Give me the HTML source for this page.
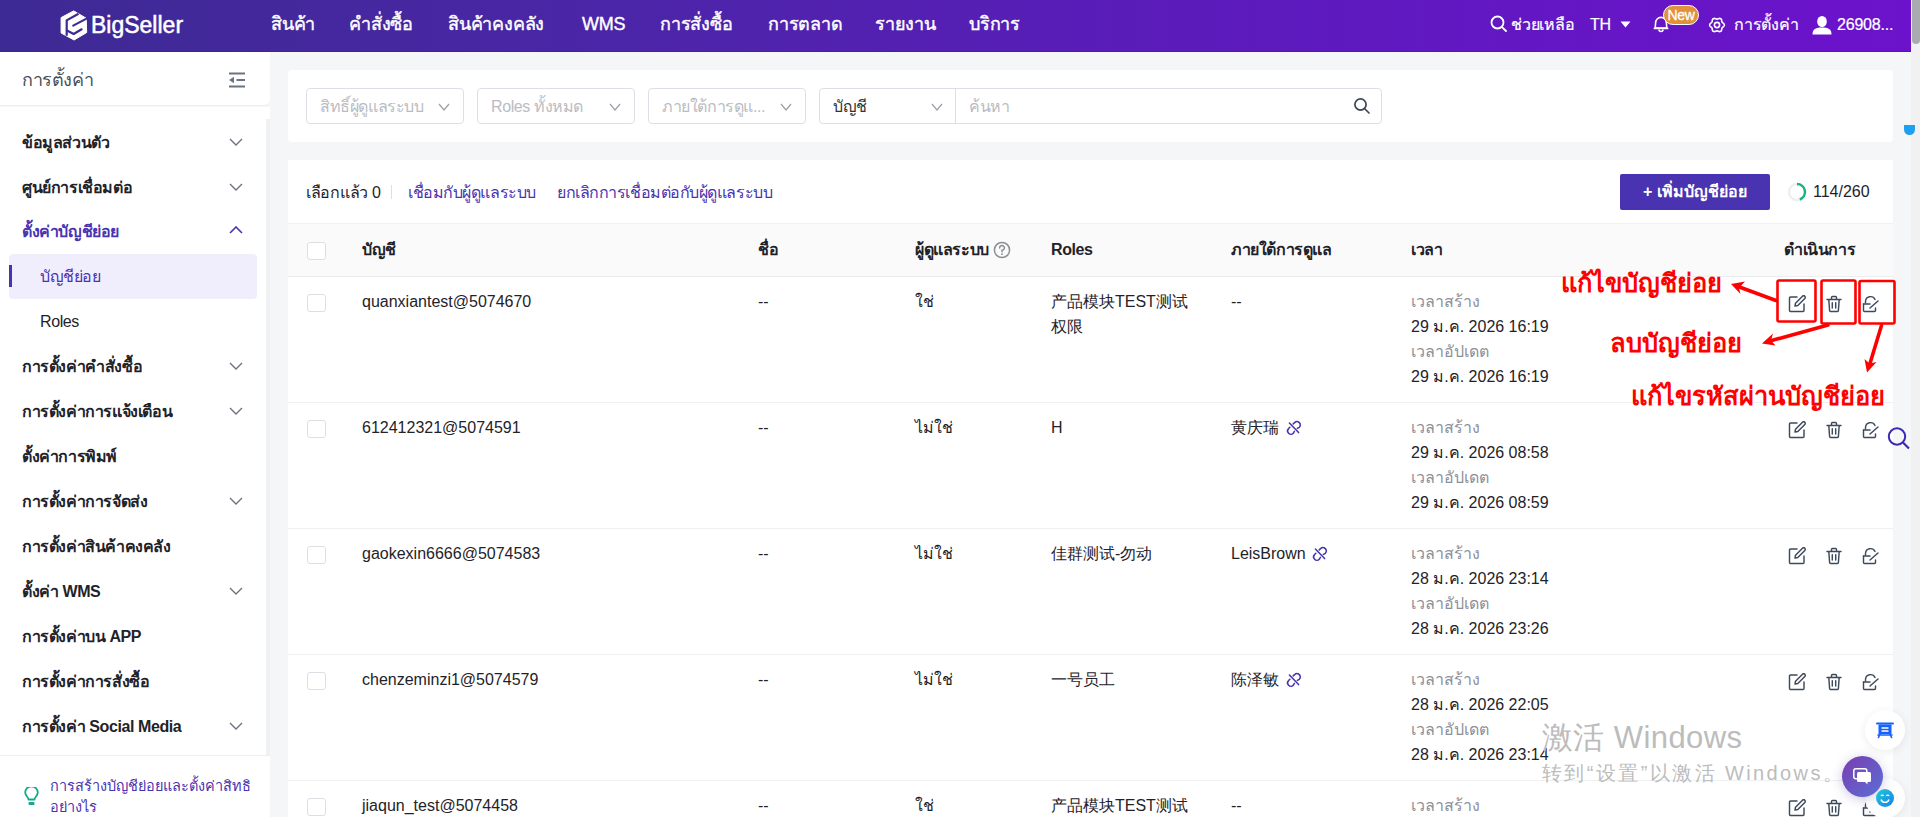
<!DOCTYPE html>
<html><head><meta charset="utf-8">
<style>
*{box-sizing:border-box;margin:0;padding:0}
html,body{width:1920px;height:817px;overflow:hidden}
body{position:relative;background:#f5f6f8;font-family:"Liberation Sans",sans-serif;color:#1f2329;font-size:16px}
.abs{position:absolute;white-space:nowrap}
#hdr{position:absolute;left:0;top:0;width:1911px;height:52px;background:linear-gradient(90deg,#3d2a93 0%,#4a26a6 30%,#5a1cba 60%,#6c12cc 100%);border-bottom:1px solid #4a1aa8}
#hdr .nav{position:absolute;top:13px;font-size:18px;line-height:22px;color:#fff;-webkit-text-stroke:0.4px #fff;letter-spacing:-0.2px}
#sb{position:absolute;left:1911px;top:0;width:9px;height:817px;background:#f1f1f1}
#sbthumb{position:absolute;left:1912px;top:0;width:8px;height:44px;background:#a8abb0;border-radius:0 0 4px 4px}
/* sidebar */
#side-h{position:absolute;left:0;top:52px;width:270px;height:54px;background:#fff;border-bottom:1px solid #eceef2;border-radius:0 0 6px 0}
#side{position:absolute;left:0;top:107px;width:270px;height:710px;background:#fff}
#side-strip{position:absolute;left:266px;top:119px;width:4px;height:636px;background:#f0f1f3}
.mi{position:absolute;left:22px;font-size:16px;line-height:20px;font-weight:bold;color:#1f2329;letter-spacing:-0.4px}
.chev{position:absolute;left:229px;width:14px;height:8px}
/* cards */
.card{position:absolute;left:288px;width:1605px;background:#fff;border-radius:4px}
.sel{position:absolute;top:88px;height:36px;border:1px solid #dcdfe6;border-radius:4px;background:#fff}
.sel .ph{position:absolute;left:13px;top:8px;font-size:16px;line-height:20px;color:#b9bcc3;letter-spacing:-0.4px}
.sel svg{position:absolute;top:13px}
.th{position:absolute;top:240px;font-size:16px;line-height:20px;font-weight:bold;color:#1f2329;letter-spacing:-0.4px}
.cb{position:absolute;left:307px;width:19px;height:18px;border:1px solid #dcdfe6;border-radius:3px;background:#fff}
.td{position:absolute;font-size:16px;line-height:20px;color:#1f2329}
.gr{color:#8c9099}
.rowline{position:absolute;left:288px;width:1605px;height:1px;background:#eef0f3}
</style></head><body>
<div id="hdr">
  <svg class="abs" style="left:56px;top:6px" width="36" height="38" viewBox="0 0 36 38"><path d="M17.7 4.9 L30.2 12.2 L30.7 26.5 L18.1 34 L5.1 27 L5.1 11.6 Z" fill="#fff" stroke="#fff" stroke-width="1" stroke-linejoin="round"/><path d="M22.5 7.8 L10.7 14.4 L10.7 29.8" fill="none" stroke="#3d2a93" stroke-width="2.2"/><path d="M17.2 19.6 L30.5 12.6" fill="none" stroke="#3d2a93" stroke-width="2.2" stroke-linecap="round"/><path d="M11 24.5 L17.7 28 L25.6 23.3" fill="none" stroke="#3d2a93" stroke-width="2.2" stroke-linecap="round" stroke-linejoin="round"/></svg>
  <div class="abs" style="left:91px;top:11px;font-size:23px;line-height:28px;color:#fff;-webkit-text-stroke:0.5px #fff">BigSeller</div>
  <div class="nav" style="left:271px">สินค้า</div>
  <div class="nav" style="left:349px">คำสั่งซื้อ</div>
  <div class="nav" style="left:448px">สินค้าคงคลัง</div>
  <div class="nav" style="left:582px">WMS</div>
  <div class="nav" style="left:660px">การสั่งซื้อ</div>
  <div class="nav" style="left:768px">การตลาด</div>
  <div class="nav" style="left:875px">รายงาน</div>
  <div class="nav" style="left:969px">บริการ</div>

  <svg class="abs" style="left:1489px;top:15px" width="19" height="18" viewBox="0 0 19 18"><circle cx="8.5" cy="7.5" r="6" fill="none" stroke="#fff" stroke-width="1.8"/><path d="M12.8 11.8 L17 16" stroke="#fff" stroke-width="1.8" stroke-linecap="round"/></svg>
  <div class="nav" style="left:1511px;font-size:16px;-webkit-text-stroke:0.2px #fff;top:14px">ช่วยเหลือ</div>
  <div class="nav" style="left:1590px;font-size:16px;-webkit-text-stroke:0.2px #fff;top:14px">TH</div>
  <svg class="abs" style="left:1620px;top:21px" width="11" height="7" viewBox="0 0 11 7"><path d="M0.5 0.5 L10.5 0.5 L5.5 6.5 Z" fill="#fff"/></svg>
  <svg class="abs" style="left:1652px;top:15px" width="18" height="19" viewBox="0 0 18 19"><path d="M3.2 13 L3.6 8 A5.4 5.6 0 0 1 14.4 8 L14.8 13 Z" fill="none" stroke="#fff" stroke-width="1.6" stroke-linejoin="round"/><path d="M2.4 13.4 H15.6" stroke="#fff" stroke-width="1.7" stroke-linecap="round"/><path d="M7 14.5 A2 2 0 0 0 11 14.5" fill="none" stroke="#fff" stroke-width="1.6"/></svg>
  <div class="abs" style="left:1663px;top:5px;width:36px;height:20px;border-radius:10px;background:#e0913a;border:1px solid #fff;color:#fff;font-size:14px;line-height:18px;text-align:center;-webkit-text-stroke:0.3px #fff;letter-spacing:-0.3px">New</div>
  <svg class="abs" style="left:1708px;top:15.6px" width="18" height="18" viewBox="0 0 18 18"><path d="M9.00 3.15 L9.39 3.11 L9.79 2.98 L10.23 2.81 L10.71 2.62 L11.21 2.48 L11.73 2.41 L12.23 2.46 L12.67 2.63 L13.05 2.94 L13.34 3.34 L13.54 3.82 L13.67 4.33 L13.75 4.84 L13.82 5.31 L13.91 5.72 L14.07 6.07 L14.30 6.39 L14.61 6.68 L14.98 6.97 L15.38 7.29 L15.75 7.66 L16.07 8.07 L16.28 8.52 L16.35 9.00 L16.28 9.48 L16.07 9.93 L15.75 10.34 L15.38 10.71 L14.98 11.03 L14.61 11.32 L14.30 11.61 L14.07 11.92 L13.91 12.28 L13.82 12.69 L13.75 13.16 L13.67 13.67 L13.54 14.18 L13.34 14.66 L13.05 15.06 L12.67 15.37 L12.23 15.54 L11.73 15.59 L11.21 15.52 L10.71 15.38 L10.23 15.19 L9.79 15.02 L9.39 14.89 L9.00 14.85 L8.61 14.89 L8.21 15.02 L7.77 15.19 L7.29 15.38 L6.79 15.52 L6.27 15.59 L5.77 15.54 L5.33 15.37 L4.95 15.06 L4.66 14.66 L4.46 14.18 L4.33 13.67 L4.25 13.16 L4.18 12.69 L4.09 12.28 L3.93 11.93 L3.70 11.61 L3.39 11.32 L3.02 11.03 L2.62 10.71 L2.25 10.34 L1.93 9.93 L1.72 9.48 L1.65 9.00 L1.72 8.52 L1.93 8.07 L2.25 7.66 L2.62 7.29 L3.02 6.97 L3.39 6.68 L3.70 6.39 L3.93 6.07 L4.09 5.72 L4.18 5.31 L4.25 4.84 L4.33 4.33 L4.46 3.82 L4.66 3.34 L4.95 2.94 L5.32 2.63 L5.77 2.46 L6.27 2.41 L6.79 2.48 L7.29 2.62 L7.77 2.81 L8.21 2.98 L8.61 3.11 Z" fill="none" stroke="#fff" stroke-width="1.6" stroke-linejoin="round"/><circle cx="9" cy="9" r="2.6" fill="none" stroke="#fff" stroke-width="1.6"/></svg>
  <div class="nav" style="left:1734px;font-size:16px;-webkit-text-stroke:0.2px #fff;top:14px">การตั้งค่า</div>
  <svg class="abs" style="left:1812px;top:15px" width="20" height="20" viewBox="0 0 20 20"><ellipse cx="10" cy="6.5" rx="4.8" ry="5.5" fill="#fff"/><path d="M0.5 19.5 C0.5 14 4 12.5 10 12.5 C16 12.5 19.5 14 19.5 19.5 Z" fill="#fff"/></svg>
  <div class="nav" style="left:1837px;font-size:16px;-webkit-text-stroke:0.2px #fff;top:14px">26908...</div>
</div>
<div id="sb"></div><div id="sbthumb"></div>

<div id="side-h"><div class="abs" style="left:22px;top:17px;font-size:18px;line-height:22px;color:#4a4f57;letter-spacing:-0.4px">การตั้งค่า</div></div>
<div id="side"></div>
<div id="side-strip"></div>
<div class="mi" style="top:133px;">ข้อมูลส่วนตัว</div>
<svg class="chev" style="top:138px" viewBox="0 0 14 8"><path d="M1 1 L7 7 L13 1" fill="none" stroke="#6b7280" stroke-width="1.4"/></svg>
<div class="mi" style="top:178px;">ศูนย์การเชื่อมต่อ</div>
<svg class="chev" style="top:183px" viewBox="0 0 14 8"><path d="M1 1 L7 7 L13 1" fill="none" stroke="#6b7280" stroke-width="1.4"/></svg>
<div class="mi" style="top:222px;color:#4a33b0;">ตั้งค่าบัญชีย่อย</div>
<svg class="chev" style="top:226px" viewBox="0 0 14 8"><path d="M1 7 L7 1 L13 7" fill="none" stroke="#4a33b0" stroke-width="1.6"/></svg>
<div class="mi" style="top:357px;">การตั้งค่าคำสั่งซื้อ</div>
<svg class="chev" style="top:362px" viewBox="0 0 14 8"><path d="M1 1 L7 7 L13 1" fill="none" stroke="#6b7280" stroke-width="1.4"/></svg>
<div class="mi" style="top:402px;">การตั้งค่าการแจ้งเตือน</div>
<svg class="chev" style="top:407px" viewBox="0 0 14 8"><path d="M1 1 L7 7 L13 1" fill="none" stroke="#6b7280" stroke-width="1.4"/></svg>
<div class="mi" style="top:447px;">ตั้งค่าการพิมพ์</div>
<div class="mi" style="top:492px;">การตั้งค่าการจัดส่ง</div>
<svg class="chev" style="top:497px" viewBox="0 0 14 8"><path d="M1 1 L7 7 L13 1" fill="none" stroke="#6b7280" stroke-width="1.4"/></svg>
<div class="mi" style="top:537px;">การตั้งค่าสินค้าคงคลัง</div>
<div class="mi" style="top:582px;">ตั้งค่า WMS</div>
<svg class="chev" style="top:587px" viewBox="0 0 14 8"><path d="M1 1 L7 7 L13 1" fill="none" stroke="#6b7280" stroke-width="1.4"/></svg>
<div class="mi" style="top:627px;">การตั้งค่าบน APP</div>
<div class="mi" style="top:672px;">การตั้งค่าการสั่งซื้อ</div>
<div class="mi" style="top:717px;">การตั้งค่า Social Media</div>
<svg class="chev" style="top:722px" viewBox="0 0 14 8"><path d="M1 1 L7 7 L13 1" fill="none" stroke="#6b7280" stroke-width="1.4"/></svg>
<div class="abs" style="left:9px;top:254px;width:248px;height:45px;background:#f0eefc;border-radius:4px"></div>
<div class="abs" style="left:9px;top:265px;width:3px;height:22px;background:#4a33b0"></div>
<div class="mi" style="left:40px;top:267px;font-weight:normal;color:#4a33b0">บัญชีย่อย</div>
<div class="mi" style="left:40px;top:312px;font-weight:normal">Roles</div>
<div class="abs" style="left:0;top:755px;width:270px;height:1px;background:#eceef2"></div>
<svg class="abs" style="left:24px;top:787px" width="15" height="19" viewBox="0 0 15 19"><path d="M4.5 12.5 C4.5 10 1.2 8.8 1.2 5.6 A6.3 6.3 0 0 1 13.8 5.6 C13.8 8.8 10.5 10 10.5 12.5 Z" fill="none" stroke="#16a889" stroke-width="1.8" stroke-linejoin="round"/><rect x="4.5" y="15" width="6" height="3" rx="1" fill="#16a889"/></svg>
<div class="abs" style="left:50px;top:776px;font-size:14.5px;line-height:21px;color:#4a33b0;white-space:normal;width:210px">การสร้างบัญชีย่อยและตั้งค่าสิทธิ<br>อย่างไร</div>
<svg class="abs" style="left:228px;top:72px" width="18" height="16" viewBox="0 0 18 16"><path d="M1 1.5 H17 M8.5 8 H17 M1 14.5 H17" stroke="#6b7280" stroke-width="2"/><path d="M1 8 L6 4.8 L6 11.2 Z" fill="#6b7280"/></svg>

<div class="card" style="top:70px;height:72px"></div>
<div class="card" style="top:160px;height:700px;border-radius:0"></div>

<div class="sel" style="left:306px;width:158px"><div class="ph">สิทธิ์ผู้ดูแลระบบ</div><svg style="left:131px;top:14px;position:absolute" width="12" height="8" viewBox="0 0 12 8"><path d="M1 1 L6 7 L11 1" fill="none" stroke="#9aa0a8" stroke-width="1.2"/></svg></div>
<div class="sel" style="left:477px;width:158px"><div class="ph">Roles ทั้งหมด</div><svg style="left:131px;top:14px;position:absolute" width="12" height="8" viewBox="0 0 12 8"><path d="M1 1 L6 7 L11 1" fill="none" stroke="#9aa0a8" stroke-width="1.2"/></svg></div>
<div class="sel" style="left:648px;width:158px"><div class="ph">ภายใต้การดูแ...</div><svg style="left:131px;top:14px;position:absolute" width="12" height="8" viewBox="0 0 12 8"><path d="M1 1 L6 7 L11 1" fill="none" stroke="#9aa0a8" stroke-width="1.2"/></svg></div>
<div class="sel" style="left:819px;width:563px"><div class="ph" style="color:#333">บัญชี</div><svg style="left:111px;top:14px;position:absolute" width="12" height="8" viewBox="0 0 12 8"><path d="M1 1 L6 7 L11 1" fill="none" stroke="#9aa0a8" stroke-width="1.2"/></svg><div style="position:absolute;left:135px;top:0;width:1px;height:34px;background:#dcdfe6"></div><div class="ph" style="left:149px">ค้นหา</div><svg style="position:absolute;left:533px;top:8px" width="18" height="18" viewBox="0 0 18 18"><circle cx="7.5" cy="7.5" r="5.6" fill="none" stroke="#3d4656" stroke-width="1.7"/><path d="M11.5 11.5 L16 16" stroke="#3d4656" stroke-width="1.7" stroke-linecap="round"/></svg></div>
<div class="td" style="left:306px;top:183px;letter-spacing:-0.3px">เลือกแล้ว 0</div>
<div class="abs" style="left:391px;top:185px;width:1px;height:14px;background:#dcdfe6"></div>
<div class="td" style="left:408px;top:183px;color:#4a33b0;letter-spacing:-0.45px">เชื่อมกับผู้ดูแลระบบ</div>
<div class="td" style="left:557px;top:183px;color:#4a33b0;letter-spacing:-0.45px">ยกเลิกการเชื่อมต่อกับผู้ดูแลระบบ</div>
<div class="abs" style="left:1620px;top:174px;width:150px;height:36px;background:#4a33b0;border-radius:2px;color:#fff;font-size:16px;line-height:36px;text-align:center;font-weight:bold">+ เพิ่มบัญชีย่อย</div>
<svg class="abs" style="left:1787px;top:182px" width="20" height="20" viewBox="0 0 20 20"><circle cx="10" cy="10" r="8" fill="none" stroke="#efefef" stroke-width="2.5"/><path d="M10 2 A8 8 0 0 1 12.8 17.5" fill="none" stroke="#19b37d" stroke-width="2.5"/></svg>
<div class="td" style="left:1813px;top:182px">114/260</div>
<div class="abs" style="left:288px;top:223px;width:1605px;height:54px;background:#fafafa;border-top:1px solid #f0f1f3;border-bottom:1px solid #ebedf0"></div>
<div class="cb" style="top:242px"></div>
<div class="th" style="left:362px">บัญชี</div>
<div class="th" style="left:758px">ชื่อ</div>
<div class="th" style="left:915px">ผู้ดูแลระบบ</div>
<div class="th" style="left:1051px">Roles</div>
<div class="th" style="left:1231px">ภายใต้การดูแล</div>
<div class="th" style="left:1411px">เวลา</div>
<div class="th" style="left:1784px">ดำเนินการ</div>
<svg class="abs" style="left:993px;top:241px" width="18" height="18" viewBox="0 0 18 18"><circle cx="9" cy="9" r="7.6" fill="none" stroke="#8c8f94" stroke-width="1.5"/><path d="M6.6 7 A2.4 2.4 0 1 1 9 9.3 L9 10.8" fill="none" stroke="#8c8f94" stroke-width="1.5" stroke-linecap="round"/><circle cx="9" cy="13.2" r="0.9" fill="#8c8f94"/></svg>
<div class="cb" style="top:294px"></div>
<div class="td" style="left:362px;top:292px">quanxiantest@5074670</div>
<div class="td" style="left:758px;top:292px">--</div>
<div class="td" style="left:915px;top:292px">ใช่</div>
<div class="td" style="left:1051px;top:291px;line-height:25px;top:289px">产品模块TEST测试<br>权限</div>
<div class="td" style="left:1231px;top:292px">--</div>
<div class="td" style="left:1411px;top:289px;line-height:25px"><span class="gr">เวลาสร้าง</span><br>29 ม.ค. 2026 16:19<br><span class="gr">เวลาอัปเดต</span><br>29 ม.ค. 2026 16:19</div>
<svg class="abs" style="left:1788px;top:295px" width="19" height="18" viewBox="0 0 19 18"><path d="M9 2 H2.5 A1 1 0 0 0 1.5 3 V15.5 A1 1 0 0 0 2.5 16.5 H15 A1 1 0 0 0 16 15.5 V9" fill="none" stroke="#3d4a5c" stroke-width="1.45" stroke-linecap="round"/><path d="M7 11 L7.5 8.2 L14.5 1.2 A1.3 1.3 0 0 1 16.8 3.5 L9.8 10.5 Z" fill="none" stroke="#3d4a5c" stroke-width="1.45" stroke-linejoin="round"/></svg>
<svg class="abs" style="left:1826px;top:295px" width="16" height="18" viewBox="0 0 16 18"><path d="M1 4.5 H15 M5.5 4.5 V2.5 A1 1 0 0 1 6.5 1.5 H9.5 A1 1 0 0 1 10.5 2.5 V4.5 M2.8 4.5 L3.6 15.5 A1 1 0 0 0 4.6 16.5 H11.4 A1 1 0 0 0 12.4 15.5 L13.2 4.5 M6.3 7.8 V13 M9.7 7.8 V13" fill="none" stroke="#3d4a5c" stroke-width="1.45" stroke-linecap="round" stroke-linejoin="round"/></svg>
<svg class="abs" style="left:1862px;top:295px" width="18" height="18" viewBox="0 0 18 18"><path d="M3.5 8 V6.5 A5 5 0 0 1 13 4.5" fill="none" stroke="#3d4a5c" stroke-width="1.45" stroke-linecap="round"/><path d="M1.5 9 H8" stroke="#3d4a5c" stroke-width="1.45" stroke-linecap="round"/><path d="M1.5 9 V15.5 A1 1 0 0 0 2.5 16.5 H12.5 A1 1 0 0 0 13.5 15.5 V13" fill="none" stroke="#3d4a5c" stroke-width="1.45" stroke-linecap="round"/><path d="M8 13 L16 6" stroke="#3d4a5c" stroke-width="1.45" stroke-linecap="round"/></svg>
<div class="cb" style="top:420px"></div>
<div class="td" style="left:362px;top:418px">612412321@5074591</div>
<div class="td" style="left:758px;top:418px">--</div>
<div class="td" style="left:915px;top:418px">ไม่ใช่</div>
<div class="td" style="left:1051px;top:417px;line-height:25px;top:415px">H</div>
<div class="td" style="left:1231px;top:418px">黄庆瑞</div>
<svg class="abs" style="left:1282px;top:416px" width="24" height="24" viewBox="0 0 24 24"><path d="M7.4 7.1 L16.6 16.6" stroke="#4433b0" stroke-width="1.5" stroke-linecap="round"/><path d="M11.2 7.9 L12.6 6.6 A3.3 3.3 0 0 1 17.3 11.3 L15.3 12.4" fill="none" stroke="#4433b0" stroke-width="1.5" stroke-linecap="round"/><path d="M7.9 11.2 L6.6 12.6 A3.3 3.3 0 0 0 11.3 17.3 L12.4 15.3" fill="none" stroke="#4433b0" stroke-width="1.5" stroke-linecap="round"/></svg>
<div class="td" style="left:1411px;top:415px;line-height:25px"><span class="gr">เวลาสร้าง</span><br>29 ม.ค. 2026 08:58<br><span class="gr">เวลาอัปเดต</span><br>29 ม.ค. 2026 08:59</div>
<svg class="abs" style="left:1788px;top:421px" width="19" height="18" viewBox="0 0 19 18"><path d="M9 2 H2.5 A1 1 0 0 0 1.5 3 V15.5 A1 1 0 0 0 2.5 16.5 H15 A1 1 0 0 0 16 15.5 V9" fill="none" stroke="#3d4a5c" stroke-width="1.45" stroke-linecap="round"/><path d="M7 11 L7.5 8.2 L14.5 1.2 A1.3 1.3 0 0 1 16.8 3.5 L9.8 10.5 Z" fill="none" stroke="#3d4a5c" stroke-width="1.45" stroke-linejoin="round"/></svg>
<svg class="abs" style="left:1826px;top:421px" width="16" height="18" viewBox="0 0 16 18"><path d="M1 4.5 H15 M5.5 4.5 V2.5 A1 1 0 0 1 6.5 1.5 H9.5 A1 1 0 0 1 10.5 2.5 V4.5 M2.8 4.5 L3.6 15.5 A1 1 0 0 0 4.6 16.5 H11.4 A1 1 0 0 0 12.4 15.5 L13.2 4.5 M6.3 7.8 V13 M9.7 7.8 V13" fill="none" stroke="#3d4a5c" stroke-width="1.45" stroke-linecap="round" stroke-linejoin="round"/></svg>
<svg class="abs" style="left:1862px;top:421px" width="18" height="18" viewBox="0 0 18 18"><path d="M3.5 8 V6.5 A5 5 0 0 1 13 4.5" fill="none" stroke="#3d4a5c" stroke-width="1.45" stroke-linecap="round"/><path d="M1.5 9 H8" stroke="#3d4a5c" stroke-width="1.45" stroke-linecap="round"/><path d="M1.5 9 V15.5 A1 1 0 0 0 2.5 16.5 H12.5 A1 1 0 0 0 13.5 15.5 V13" fill="none" stroke="#3d4a5c" stroke-width="1.45" stroke-linecap="round"/><path d="M8 13 L16 6" stroke="#3d4a5c" stroke-width="1.45" stroke-linecap="round"/></svg>
<div class="rowline" style="top:402px"></div>
<div class="cb" style="top:546px"></div>
<div class="td" style="left:362px;top:544px">gaokexin6666@5074583</div>
<div class="td" style="left:758px;top:544px">--</div>
<div class="td" style="left:915px;top:544px">ไม่ใช่</div>
<div class="td" style="left:1051px;top:543px;line-height:25px;top:541px">佳群测试-勿动</div>
<div class="td" style="left:1231px;top:544px">LeisBrown</div>
<svg class="abs" style="left:1308px;top:542px" width="24" height="24" viewBox="0 0 24 24"><path d="M7.4 7.1 L16.6 16.6" stroke="#4433b0" stroke-width="1.5" stroke-linecap="round"/><path d="M11.2 7.9 L12.6 6.6 A3.3 3.3 0 0 1 17.3 11.3 L15.3 12.4" fill="none" stroke="#4433b0" stroke-width="1.5" stroke-linecap="round"/><path d="M7.9 11.2 L6.6 12.6 A3.3 3.3 0 0 0 11.3 17.3 L12.4 15.3" fill="none" stroke="#4433b0" stroke-width="1.5" stroke-linecap="round"/></svg>
<div class="td" style="left:1411px;top:541px;line-height:25px"><span class="gr">เวลาสร้าง</span><br>28 ม.ค. 2026 23:14<br><span class="gr">เวลาอัปเดต</span><br>28 ม.ค. 2026 23:26</div>
<svg class="abs" style="left:1788px;top:547px" width="19" height="18" viewBox="0 0 19 18"><path d="M9 2 H2.5 A1 1 0 0 0 1.5 3 V15.5 A1 1 0 0 0 2.5 16.5 H15 A1 1 0 0 0 16 15.5 V9" fill="none" stroke="#3d4a5c" stroke-width="1.45" stroke-linecap="round"/><path d="M7 11 L7.5 8.2 L14.5 1.2 A1.3 1.3 0 0 1 16.8 3.5 L9.8 10.5 Z" fill="none" stroke="#3d4a5c" stroke-width="1.45" stroke-linejoin="round"/></svg>
<svg class="abs" style="left:1826px;top:547px" width="16" height="18" viewBox="0 0 16 18"><path d="M1 4.5 H15 M5.5 4.5 V2.5 A1 1 0 0 1 6.5 1.5 H9.5 A1 1 0 0 1 10.5 2.5 V4.5 M2.8 4.5 L3.6 15.5 A1 1 0 0 0 4.6 16.5 H11.4 A1 1 0 0 0 12.4 15.5 L13.2 4.5 M6.3 7.8 V13 M9.7 7.8 V13" fill="none" stroke="#3d4a5c" stroke-width="1.45" stroke-linecap="round" stroke-linejoin="round"/></svg>
<svg class="abs" style="left:1862px;top:547px" width="18" height="18" viewBox="0 0 18 18"><path d="M3.5 8 V6.5 A5 5 0 0 1 13 4.5" fill="none" stroke="#3d4a5c" stroke-width="1.45" stroke-linecap="round"/><path d="M1.5 9 H8" stroke="#3d4a5c" stroke-width="1.45" stroke-linecap="round"/><path d="M1.5 9 V15.5 A1 1 0 0 0 2.5 16.5 H12.5 A1 1 0 0 0 13.5 15.5 V13" fill="none" stroke="#3d4a5c" stroke-width="1.45" stroke-linecap="round"/><path d="M8 13 L16 6" stroke="#3d4a5c" stroke-width="1.45" stroke-linecap="round"/></svg>
<div class="rowline" style="top:528px"></div>
<div class="cb" style="top:672px"></div>
<div class="td" style="left:362px;top:670px">chenzeminzi1@5074579</div>
<div class="td" style="left:758px;top:670px">--</div>
<div class="td" style="left:915px;top:670px">ไม่ใช่</div>
<div class="td" style="left:1051px;top:669px;line-height:25px;top:667px">一号员工</div>
<div class="td" style="left:1231px;top:670px">陈泽敏</div>
<svg class="abs" style="left:1282px;top:668px" width="24" height="24" viewBox="0 0 24 24"><path d="M7.4 7.1 L16.6 16.6" stroke="#4433b0" stroke-width="1.5" stroke-linecap="round"/><path d="M11.2 7.9 L12.6 6.6 A3.3 3.3 0 0 1 17.3 11.3 L15.3 12.4" fill="none" stroke="#4433b0" stroke-width="1.5" stroke-linecap="round"/><path d="M7.9 11.2 L6.6 12.6 A3.3 3.3 0 0 0 11.3 17.3 L12.4 15.3" fill="none" stroke="#4433b0" stroke-width="1.5" stroke-linecap="round"/></svg>
<div class="td" style="left:1411px;top:667px;line-height:25px"><span class="gr">เวลาสร้าง</span><br>28 ม.ค. 2026 22:05<br><span class="gr">เวลาอัปเดต</span><br>28 ม.ค. 2026 23:14</div>
<svg class="abs" style="left:1788px;top:673px" width="19" height="18" viewBox="0 0 19 18"><path d="M9 2 H2.5 A1 1 0 0 0 1.5 3 V15.5 A1 1 0 0 0 2.5 16.5 H15 A1 1 0 0 0 16 15.5 V9" fill="none" stroke="#3d4a5c" stroke-width="1.45" stroke-linecap="round"/><path d="M7 11 L7.5 8.2 L14.5 1.2 A1.3 1.3 0 0 1 16.8 3.5 L9.8 10.5 Z" fill="none" stroke="#3d4a5c" stroke-width="1.45" stroke-linejoin="round"/></svg>
<svg class="abs" style="left:1826px;top:673px" width="16" height="18" viewBox="0 0 16 18"><path d="M1 4.5 H15 M5.5 4.5 V2.5 A1 1 0 0 1 6.5 1.5 H9.5 A1 1 0 0 1 10.5 2.5 V4.5 M2.8 4.5 L3.6 15.5 A1 1 0 0 0 4.6 16.5 H11.4 A1 1 0 0 0 12.4 15.5 L13.2 4.5 M6.3 7.8 V13 M9.7 7.8 V13" fill="none" stroke="#3d4a5c" stroke-width="1.45" stroke-linecap="round" stroke-linejoin="round"/></svg>
<svg class="abs" style="left:1862px;top:673px" width="18" height="18" viewBox="0 0 18 18"><path d="M3.5 8 V6.5 A5 5 0 0 1 13 4.5" fill="none" stroke="#3d4a5c" stroke-width="1.45" stroke-linecap="round"/><path d="M1.5 9 H8" stroke="#3d4a5c" stroke-width="1.45" stroke-linecap="round"/><path d="M1.5 9 V15.5 A1 1 0 0 0 2.5 16.5 H12.5 A1 1 0 0 0 13.5 15.5 V13" fill="none" stroke="#3d4a5c" stroke-width="1.45" stroke-linecap="round"/><path d="M8 13 L16 6" stroke="#3d4a5c" stroke-width="1.45" stroke-linecap="round"/></svg>
<div class="rowline" style="top:654px"></div>
<div class="cb" style="top:798px"></div>
<div class="td" style="left:362px;top:796px">jiaqun_test@5074458</div>
<div class="td" style="left:758px;top:796px">--</div>
<div class="td" style="left:915px;top:796px">ใช่</div>
<div class="td" style="left:1051px;top:795px;line-height:25px;top:793px">产品模块TEST测试</div>
<div class="td" style="left:1231px;top:796px">--</div>
<div class="td" style="left:1411px;top:793px;line-height:25px"><span class="gr">เวลาสร้าง</span><br><br><span class="gr">เวลาอัปเดต</span><br></div>
<svg class="abs" style="left:1788px;top:799px" width="19" height="18" viewBox="0 0 19 18"><path d="M9 2 H2.5 A1 1 0 0 0 1.5 3 V15.5 A1 1 0 0 0 2.5 16.5 H15 A1 1 0 0 0 16 15.5 V9" fill="none" stroke="#3d4a5c" stroke-width="1.45" stroke-linecap="round"/><path d="M7 11 L7.5 8.2 L14.5 1.2 A1.3 1.3 0 0 1 16.8 3.5 L9.8 10.5 Z" fill="none" stroke="#3d4a5c" stroke-width="1.45" stroke-linejoin="round"/></svg>
<svg class="abs" style="left:1826px;top:799px" width="16" height="18" viewBox="0 0 16 18"><path d="M1 4.5 H15 M5.5 4.5 V2.5 A1 1 0 0 1 6.5 1.5 H9.5 A1 1 0 0 1 10.5 2.5 V4.5 M2.8 4.5 L3.6 15.5 A1 1 0 0 0 4.6 16.5 H11.4 A1 1 0 0 0 12.4 15.5 L13.2 4.5 M6.3 7.8 V13 M9.7 7.8 V13" fill="none" stroke="#3d4a5c" stroke-width="1.45" stroke-linecap="round" stroke-linejoin="round"/></svg>
<svg class="abs" style="left:1862px;top:799px" width="18" height="18" viewBox="0 0 18 18"><path d="M3.5 8 V6.5 A5 5 0 0 1 13 4.5" fill="none" stroke="#3d4a5c" stroke-width="1.45" stroke-linecap="round"/><path d="M1.5 9 H8" stroke="#3d4a5c" stroke-width="1.45" stroke-linecap="round"/><path d="M1.5 9 V15.5 A1 1 0 0 0 2.5 16.5 H12.5 A1 1 0 0 0 13.5 15.5 V13" fill="none" stroke="#3d4a5c" stroke-width="1.45" stroke-linecap="round"/><path d="M8 13 L16 6" stroke="#3d4a5c" stroke-width="1.45" stroke-linecap="round"/></svg>
<div class="rowline" style="top:780px"></div>
<svg class="abs" style="left:0;top:0" width="1920" height="817" viewBox="0 0 1920 817"><g fill="none" stroke="#ff0000" stroke-width="2.6" stroke-linejoin="round"><rect x="1777.5" y="280.5" width="38" height="41" rx="1.5"/><rect x="1821.5" y="280.5" width="34" height="43" rx="1.5"/><rect x="1859.5" y="281" width="35" height="42.5" rx="1.5"/></g><g stroke="#ff0000" stroke-width="3.6" stroke-linecap="round" fill="none"><path d="M1776 300.5 L1738 286.5"/><path d="M1828 325 L1770 341"/><path d="M1881.5 325.5 L1869.5 365"/></g><g fill="#ff0000"><path d="M1731 284 L1745 281.5 L1739 288 L1740.5 294 Z"/><path d="M1762 343.5 L1773 333.5 L1771 340.5 L1775.5 345.5 Z"/><path d="M1867 372.5 L1864.5 359 L1869.5 363.5 L1876.5 362 Z"/></g></svg>
<div style="position:absolute;white-space:nowrap;font-family:'Liberation Serif',serif;color:#ff0000;font-weight:bold;font-size:25.5px;line-height:30px;left:1561px;top:269px">แก้ไขบัญชีย่อย</div>
<div style="position:absolute;white-space:nowrap;font-family:'Liberation Serif',serif;color:#ff0000;font-weight:bold;font-size:25.5px;line-height:30px;left:1610px;top:329px">ลบบัญชีย่อย</div>
<div style="position:absolute;white-space:nowrap;font-family:'Liberation Serif',serif;color:#ff0000;font-weight:bold;font-size:25.5px;line-height:30px;left:1631px;top:382px">แก้ไขรหัสผ่านบัญชีย่อย</div>
<svg class="abs" style="left:1885px;top:425px" width="26" height="26" viewBox="0 0 26 26"><circle cx="12" cy="11.5" r="8.2" fill="none" stroke="#3a2bb0" stroke-width="2"/><path d="M18 17.5 L24 23.5" stroke="#3a2bb0" stroke-width="2.2"/></svg>
<div class="abs" style="left:1542px;top:720px;font-size:31px;line-height:36px;color:#bcbcbc;letter-spacing:0.4px">激活 Windows</div>
<div class="abs" style="left:1542px;top:760px;font-size:20px;line-height:26px;color:#bcbcbc;letter-spacing:2.4px">转到“设置”以激活 Windows。</div>
<div class="abs" style="left:1865px;top:710px;width:40px;height:40px;border-radius:50%;background:#fff;box-shadow:0 2px 10px rgba(0,0,0,0.08)"></div>
<svg class="abs" style="left:1876px;top:722px" width="18" height="17" viewBox="0 0 18 17"><path d="M1 1.5 H17" stroke="#1463ff" stroke-width="2" stroke-linecap="round"/><rect x="2.5" y="2.5" width="13" height="9.5" fill="#1463ff"/><path d="M5.5 6 H12.5 M5.5 9 H12.5" stroke="#fff" stroke-width="1.3"/><path d="M4 12 L2.5 15.5 M14 12 L15.5 15.5 M2 13 H16" stroke="#1463ff" stroke-width="1.6" stroke-linecap="round"/></svg>
<div class="abs" style="left:1865px;top:778px;width:40px;height:40px;border-radius:50%;background:#fff;box-shadow:0 2px 10px rgba(0,0,0,0.08)"></div>
<div class="abs" style="left:1842px;top:756px;width:41px;height:41px;border-radius:50%;background:linear-gradient(135deg,#7a3db0,#5b6fd6);box-shadow:0 2px 12px rgba(60,40,140,0.25)"></div>
<svg class="abs" style="left:1853px;top:768px" width="19" height="17" viewBox="0 0 19 17"><rect x="0.8" y="0.8" width="13" height="10" rx="2" fill="none" stroke="#fff" stroke-width="1.5"/><rect x="4" y="4" width="14" height="10" rx="1.5" fill="#fff"/><path d="M12 14 L14.5 16.5 L14.5 14 Z" fill="#fff"/></svg>
<div class="abs" style="left:1876px;top:789px;width:18px;height:18px;border-radius:50%;background:linear-gradient(135deg,#1ccdd4,#1a7ef0)"></div>
<svg class="abs" style="left:1876px;top:789px" width="18" height="18" viewBox="0 0 18 18"><path d="M5 7 A1.3 1.3 0 0 1 7.5 7 M10.5 7 A1.3 1.3 0 0 1 13 7" fill="none" stroke="#fff" stroke-width="1.2"/><path d="M5 10.5 A4.2 4.2 0 0 0 13 10.5" fill="none" stroke="#fff" stroke-width="1.4"/></svg>
<div class="abs" style="left:1904px;top:125px;width:11px;height:10px;background:#1ea0f0;border-radius:0 0 6px 6px"></div>
</body></html>
